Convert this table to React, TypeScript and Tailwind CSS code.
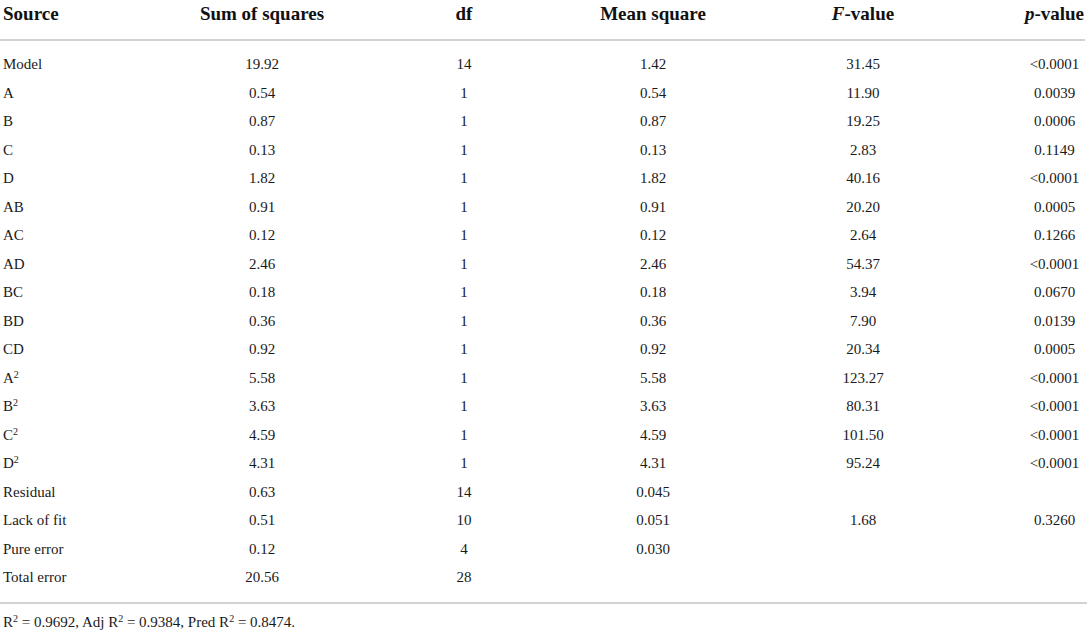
import React from "react";

type Row = { src: React.ReactNode; ss: string; df: string; ms: string; f: string; p: string };

const sq = (l: string) => (
  <span>
    {l}
    <sup className="text-[10px]">2</sup>
  </span>
);

const rows: Row[] = [
  { src: "Model", ss: "19.92", df: "14", ms: "1.42", f: "31.45", p: "<0.0001" },
  { src: "A", ss: "0.54", df: "1", ms: "0.54", f: "11.90", p: "0.0039" },
  { src: "B", ss: "0.87", df: "1", ms: "0.87", f: "19.25", p: "0.0006" },
  { src: "C", ss: "0.13", df: "1", ms: "0.13", f: "2.83", p: "0.1149" },
  { src: "D", ss: "1.82", df: "1", ms: "1.82", f: "40.16", p: "<0.0001" },
  { src: "AB", ss: "0.91", df: "1", ms: "0.91", f: "20.20", p: "0.0005" },
  { src: "AC", ss: "0.12", df: "1", ms: "0.12", f: "2.64", p: "0.1266" },
  { src: "AD", ss: "2.46", df: "1", ms: "2.46", f: "54.37", p: "<0.0001" },
  { src: "BC", ss: "0.18", df: "1", ms: "0.18", f: "3.94", p: "0.0670" },
  { src: "BD", ss: "0.36", df: "1", ms: "0.36", f: "7.90", p: "0.0139" },
  { src: "CD", ss: "0.92", df: "1", ms: "0.92", f: "20.34", p: "0.0005" },
  { src: sq("A"), ss: "5.58", df: "1", ms: "5.58", f: "123.27", p: "<0.0001" },
  { src: sq("B"), ss: "3.63", df: "1", ms: "3.63", f: "80.31", p: "<0.0001" },
  { src: sq("C"), ss: "4.59", df: "1", ms: "4.59", f: "101.50", p: "<0.0001" },
  { src: sq("D"), ss: "4.31", df: "1", ms: "4.31", f: "95.24", p: "<0.0001" },
  { src: "Residual", ss: "0.63", df: "14", ms: "0.045", f: "", p: "" },
  { src: "Lack of fit", ss: "0.51", df: "10", ms: "0.051", f: "1.68", p: "0.3260" },
  { src: "Pure error", ss: "0.12", df: "4", ms: "0.030", f: "", p: "" },
  { src: "Total error", ss: "20.56", df: "28", ms: "", f: "", p: "" },
];

const grid = "grid grid-cols-[150px_224px_180px_198px_222px_1fr]";

export default function App() {
  return (
    <div
      className="w-[1089px] h-[632px] overflow-hidden bg-white text-[#1a1a1a]"
      style={{ fontFamily: '"Liberation Serif", "Times New Roman", serif' }}
    >
      <div className={`${grid} h-[25px] items-center text-[19px] font-bold text-[#111]`}>
        <div className="pl-[3px]">Source</div>
        <div className="text-center">Sum of squares</div>
        <div className="text-center">df</div>
        <div className="text-center">Mean square</div>
        <div className="text-center">
          <i>F</i>-value
        </div>
        <div className="text-center pl-[46px]">
          <i>p</i>-value
        </div>
      </div>
      <div className="mt-[14px] h-[2px] w-[1085px] bg-[#d2d2d2]" />
      <div className="pt-[9px]">
        {rows.map((r, i) => (
          <div key={i} className={`${grid} h-[28.5px] items-center text-[15px]`}>
            <div className="pl-[3px] whitespace-nowrap">{r.src}</div>
            <div className="text-center">{r.ss}</div>
            <div className="text-center">{r.df}</div>
            <div className="text-center">{r.ms}</div>
            <div className="text-center">{r.f}</div>
            <div className="text-center pl-[46px]">{r.p}</div>
          </div>
        ))}
      </div>
      <div className="mt-[10px] h-[2px] w-[1087px] bg-[#d2d2d2]" />
      <div className="mt-[8px] pl-[3px] text-[15px] leading-[20px] whitespace-nowrap">
        R<sup className="text-[10px]">2</sup> = 0.9692, Adj R<sup className="text-[10px]">2</sup> = 0.9384, Pred R
        <sup className="text-[10px]">2</sup> = 0.8474.
      </div>
    </div>
  );
}
